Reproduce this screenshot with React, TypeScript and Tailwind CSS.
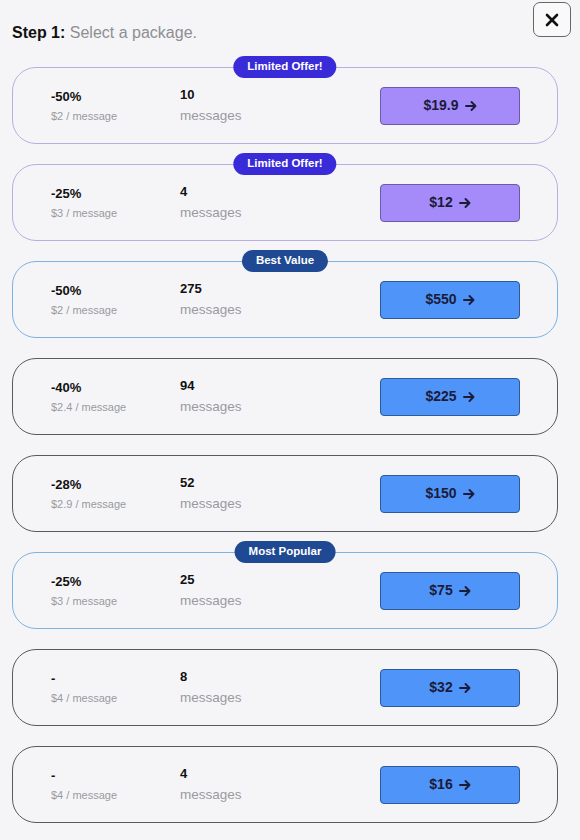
import { useState } from 'react'

type Tone = 'limited' | 'featured' | 'plain'

type Pack = {
  discount: string
  perMessage: string
  count: number
  price: string
  tone: Tone
  badge?: string
}

const packs: Pack[] = [
  { discount: '-50%', perMessage: '$2 / message', count: 10, price: '$19.9', tone: 'limited', badge: 'Limited Offer!' },
  { discount: '-25%', perMessage: '$3 / message', count: 4, price: '$12', tone: 'limited', badge: 'Limited Offer!' },
  { discount: '-50%', perMessage: '$2 / message', count: 275, price: '$550', tone: 'featured', badge: 'Best Value' },
  { discount: '-40%', perMessage: '$2.4 / message', count: 94, price: '$225', tone: 'plain' },
  { discount: '-28%', perMessage: '$2.9 / message', count: 52, price: '$150', tone: 'plain' },
  { discount: '-25%', perMessage: '$3 / message', count: 25, price: '$75', tone: 'featured', badge: 'Most Popular' },
  { discount: '-', perMessage: '$4 / message', count: 8, price: '$32', tone: 'plain' },
  { discount: '-', perMessage: '$4 / message', count: 4, price: '$16', tone: 'plain' },
]

const cardBorder: Record<Tone, string> = {
  limited: 'border-[#b8aee2]',
  featured: 'border-[#7fb2e2]',
  plain: 'border-[#5a5a5e]',
}

const badgeBg: Record<Tone, string> = {
  limited: 'bg-[#3a2bd9]',
  featured: 'bg-[#1f4a93]',
  plain: 'bg-[#1f4a93]',
}

const buttonStyle: Record<Tone, string> = {
  limited: 'bg-[#a48bf9] border-[#6a5aa8]',
  featured: 'bg-[#4f94f9] border-[#2d5a98]',
  plain: 'bg-[#4f94f9] border-[#2d5a98]',
}

const Arrow = () => (
  <svg width="12" height="12" viewBox="0 0 12 12" fill="none" className="ml-[6px]">
    <path d="M1 6 H10.5 M6.5 2 L10.5 6 L6.5 10" stroke="#1b1b3a" strokeWidth="1.9" strokeLinecap="round" strokeLinejoin="round" />
  </svg>
)

const PackCard = ({ pack, onPick }: { pack: Pack; onPick: () => void }) => (
  <div className={`relative flex h-[77px] items-center rounded-[24px] border pl-[38px] pr-[37px] ${cardBorder[pack.tone]}`}>
    {pack.badge ? (
      <div
        className={`absolute left-1/2 top-[-12px] flex h-[22px] -translate-x-1/2 items-center rounded-full px-[14px] text-[11.5px] font-bold text-white ${badgeBg[pack.tone]}`}
      >
        {pack.badge}
      </div>
    ) : null}
    <div className="w-[129px] leading-none">
      <div className="text-[13px] font-bold text-[#111]">{pack.discount}</div>
      <div className="mt-[8px] text-[11px] text-[#9a9a9e]">{pack.perMessage}</div>
    </div>
    <div className="leading-none">
      <div className="text-[13px] font-bold text-[#111]">{pack.count}</div>
      <div className="mt-[8px] text-[13.5px] text-[#9a9a9e]">messages</div>
    </div>
    <button
      onClick={onPick}
      className={`ml-auto flex h-[38px] w-[140px] items-center justify-center rounded-[4px] border text-[14px] font-bold text-[#1b1b3a] ${buttonStyle[pack.tone]}`}
    >
      {pack.price}
      <Arrow />
    </button>
  </div>
)

export default function App() {
  const [picked, setPicked] = useState<number | null>(null)

  return (
    <div
      className="min-h-[840px] w-[580px] bg-[#f5f5f7] px-[12px] pt-[2px]"
      style={{ fontFamily: '"Liberation Sans", Arial, sans-serif' }}
      data-picked={picked ?? ''}
    >
      <div className="flex items-start justify-between">
        <h1 className="mt-[23px] text-[16px] leading-none">
          <span className="font-bold text-[#111]">Step 1:</span>{' '}
          <span className="text-[#8e8e93]">Select a package.</span>
        </h1>
        <button className="mr-[-3px] flex h-[35px] w-[38px] items-center justify-center rounded-[7px] border border-[#666] bg-white/40">
          <svg width="14" height="14" viewBox="0 0 14 14" fill="none">
            <path d="M2 2 L12 12 M12 2 L2 12" stroke="#111" strokeWidth="2.6" strokeLinecap="round" />
          </svg>
        </button>
      </div>
      <div className="mt-[26px] flex w-[546px] flex-col gap-[20px] pb-[18px]">
        {packs.map((pack, i) => (
          <PackCard key={i} pack={pack} onPick={() => setPicked(i)} />
        ))}
      </div>
    </div>
  )
}
